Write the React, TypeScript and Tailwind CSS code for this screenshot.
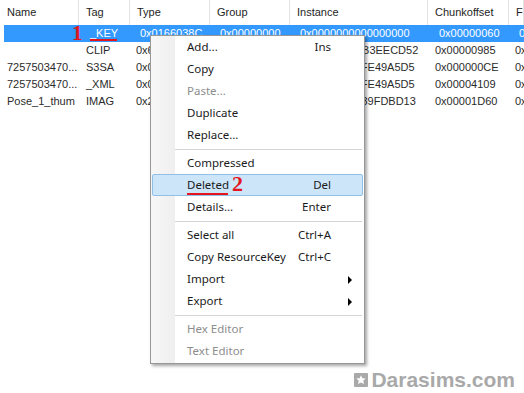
import React from 'react'

type Row = {
  name: string
  tag: string
  type: string
  group: string
  instance: string
  chunk: string
  fi: string
  selected?: boolean
}

type MenuEntry =
  | { kind: 'item'; label: string; shortcut?: string; disabled?: boolean; submenu?: boolean; active?: boolean }
  | { kind: 'sep' }

const rows: Row[] = [
  { name: '', tag: '_KEY', type: '0x0166038C', group: '0x00000000', instance: '0x0000000000000000', chunk: '0x00000060', fi: '0x', selected: true },
  { name: '', tag: 'CLIP', type: '0x6B82D4F1', group: '0x00000000', instance: '0x6B9A1A2DB3EECD52', chunk: '0x00000985', fi: '0x' },
  { name: '7257503470...', tag: 'S3SA', type: '0x0CE6C8A3', group: '0x00000000', instance: '0x64B8E1C0FE49A5D5', chunk: '0x000000CE', fi: '0x' },
  { name: '7257503470...', tag: '_XML', type: '0x0333406C', group: '0x00000000', instance: '0x64B8E1C0FE49A5D5', chunk: '0x00004109', fi: '0x' },
  { name: 'Pose_1_thum', tag: 'IMAG', type: '0x2E75C764', group: '0x00000000', instance: '0x0F3B85AC39FDBD13', chunk: '0x00001D60', fi: '0x' },
]

const menu: MenuEntry[] = [
  { kind: 'item', label: 'Add...', shortcut: 'Ins' },
  { kind: 'item', label: 'Copy' },
  { kind: 'item', label: 'Paste...', disabled: true },
  { kind: 'item', label: 'Duplicate' },
  { kind: 'item', label: 'Replace...' },
  { kind: 'sep' },
  { kind: 'item', label: 'Compressed' },
  { kind: 'item', label: 'Deleted', shortcut: 'Del', active: true },
  { kind: 'item', label: 'Details...', shortcut: 'Enter' },
  { kind: 'sep' },
  { kind: 'item', label: 'Select all', shortcut: 'Ctrl+A' },
  { kind: 'item', label: 'Copy ResourceKey', shortcut: 'Ctrl+C' },
  { kind: 'item', label: 'Import', submenu: true },
  { kind: 'item', label: 'Export', submenu: true },
  { kind: 'sep' },
  { kind: 'item', label: 'Hex Editor', disabled: true },
  { kind: 'item', label: 'Text Editor', disabled: true },
]

const cols = 'grid grid-cols-[79px_51px_80px_80px_138px_81px_1fr]'
const headers = ['Name', 'Tag', 'Type', 'Group', 'Instance', 'Chunkoffset', 'Fi']

function ContextMenu() {
  return (
    <div className="absolute left-[150px] top-[35px] w-[215px] border border-[#979797] bg-white pb-[1px] shadow-[2px_2px_3px_rgba(0,0,0,0.35)] font-['Noto_Sans',sans-serif] text-[11.5px] text-[#1a1a1a]">
      <div className="absolute left-0 top-0 bottom-0 w-[24px] bg-gradient-to-r from-[#f7f7f7] to-[#efefef]" />
      <div className="relative flex flex-col">
        {menu.map((m, i) =>
          m.kind === 'sep' ? (
            <div key={i} className="flex h-[6px] items-center pl-[24px] pr-[2px]">
              <div className="h-px w-full bg-[#d4d4d4]" />
            </div>
          ) : (
            <div
              key={i}
              className={`relative mx-[1px] flex h-[22px] items-center pl-[34px] pr-[31px] ${
                m.active ? 'rounded-[2px] border border-[#90c0ea] bg-[#cde5f9]' : 'border border-transparent'
              } ${m.disabled ? 'text-[#8d8d8d]' : ''}`}
            >
              <span className="relative">
                {m.label}
                {m.active && (
                  <>
                    <span className="absolute left-0 top-[17px] h-[2px] w-[41px] bg-[#e2161c]" />
                    <span className="absolute left-[45px] top-[-3px] font-['Liberation_Serif',serif] text-[22px] font-bold leading-none text-[#e2161c]">
                      2
                    </span>
                  </>
                )}
              </span>
              <span className="ml-auto">{m.shortcut}</span>
              {m.submenu && (
                <span className="absolute right-[10px] top-[7px] h-0 w-0 border-y-[4px] border-l-[4px] border-y-transparent border-l-black" />
              )}
            </div>
          )
        )}
      </div>
    </div>
  )
}

export default function App() {
  return (
    <div className="relative h-[393px] w-[524px] overflow-hidden bg-white font-['Liberation_Sans',Arial,sans-serif] text-[11px]">
      <div className={`${cols} h-[25px] text-[#1e1e1e]`}>
        {headers.map((h) => (
          <div key={h} className="flex items-center overflow-hidden whitespace-nowrap border-r border-[#e3e3e3] pl-[7px]">
            {h}
          </div>
        ))}
      </div>

      <div className="flex flex-col">
        {rows.map((r, i) => (
          <div
            key={i}
            className={`${cols} relative h-[17px] items-center whitespace-nowrap ${
              r.selected ? 'ml-[4px] bg-[#3399ff] text-white' : 'text-[#2b2b2b]'
            }`}
          >
            <div className={`overflow-hidden ${r.selected ? 'pl-[3px]' : 'pl-[7px]'}`}>{r.name}</div>
            <div className="relative overflow-visible pl-[7px]">
              {r.tag}
              {r.selected && (
                <>
                  <span className="absolute left-[7px] top-[14px] h-[2px] w-[27px] bg-[#e2161c]" />
                  <span className="absolute left-[-11px] top-[-2px] font-['Liberation_Serif',serif] text-[21px] font-bold leading-none text-[#e2161c]">
                    1
                  </span>
                </>
              )}
            </div>
            <div className="overflow-hidden pl-[6px]">{r.type}</div>
            <div className="overflow-hidden pl-[6px]">{r.group}</div>
            <div className="overflow-hidden pl-[6px]">{r.instance}</div>
            <div className="overflow-hidden pl-[7px]">{r.chunk}</div>
            <div className="overflow-hidden pl-[6px]">{r.fi}</div>
          </div>
        ))}
      </div>

      <ContextMenu />

      <div className="absolute bottom-[3px] right-[9px] flex items-center gap-[3px] font-['Liberation_Sans',Arial,sans-serif] text-[21px] font-bold leading-none text-[#a9a9a9]">
        <svg width="14" height="14" viewBox="0 0 14 14">
          <rect width="14" height="14" rx="1" fill="#a9a9a9" />
          <path d="M7 2.2 8.4 5.3 11.7 5.6 9.2 7.8 10 11.1 7 9.4 4 11.1 4.8 7.8 2.3 5.6 5.6 5.3Z" fill="#fff" />
        </svg>
        <span>Darasims.com</span>
      </div>
    </div>
  )
}
